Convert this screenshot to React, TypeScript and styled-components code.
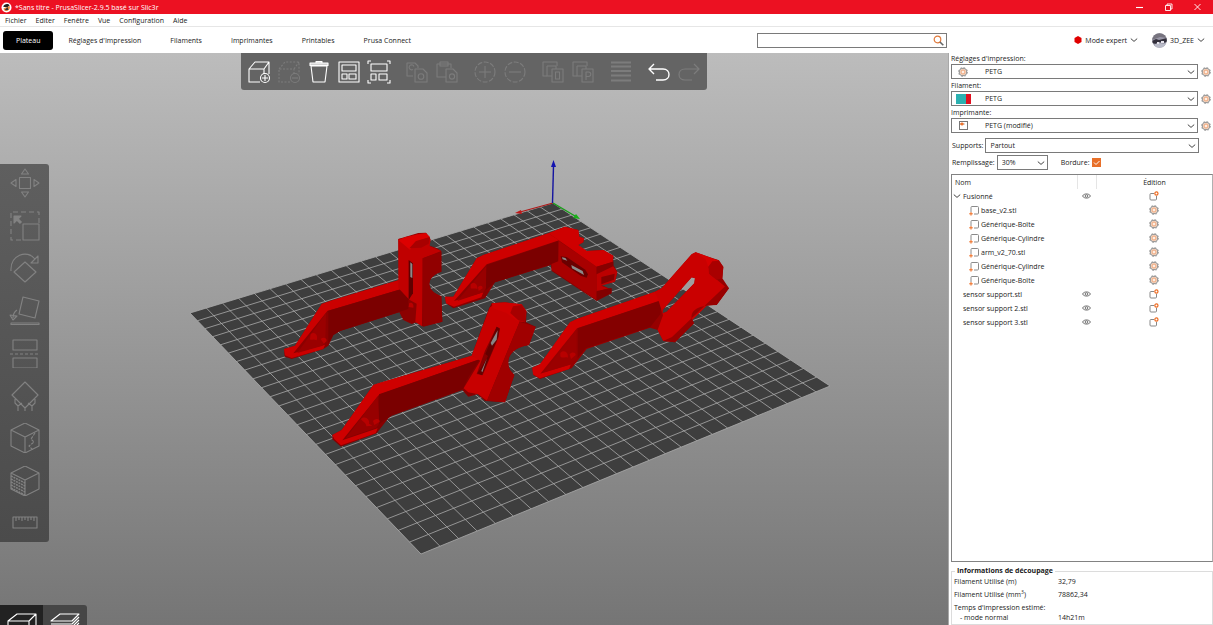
import React from "react";
import styled, { createGlobalStyle } from "styled-components";

const GlobalStyle = createGlobalStyle`
  * { box-sizing: border-box; }
  html, body, #root { height: 100%; }
  body { margin: 0; overflow: hidden; background: #fff; }
  body, button, input, select {
    font-family: "Open Sans", "Noto Sans", sans-serif;
    font-size: 7px;
    line-height: 11px;
    color: #1a1a1a;
  }
  button { border: 0; padding: 0; background: none; }
  svg { display: block; flex: none; }
`;

const Page = styled.div`
  height: 100vh;
  display: flex;
  flex-direction: column;
`;

/* ---------- title bar, menu, tabs ---------- */

const TitleBar = styled.header`
  flex: none;
  height: 14px;
  display: flex;
  align-items: center;
  background: #ec1122;
  color: #fff;
  padding: 0 10px 0 1px;
`;
const WindowTitle = styled.span`
  flex: 1;
  margin-left: 3px;
`;
const WindowButtons = styled.div`
  display: flex;
  gap: 18px;
  button { width: 11px; height: 12px; color: #fff; }
`;
const MenuBar = styled.nav`
  flex: none;
  height: 13px;
  display: flex;
  align-items: center;
  gap: 9px;
  padding: 0 5px;
  border-bottom: 1px solid #e6e6e6;
`;
const TabBar = styled.div`
  flex: none;
  height: 26px;
  display: flex;
  align-items: center;
  gap: 1px;
  padding-left: 3px;
`;
const Tab = styled.button<{ $active?: boolean }>`
  height: 19px;
  padding: 0 ${(p) => (p.$active ? 13 : 14)}px;
  border-radius: 3px;
  background: ${(p) => (p.$active ? "#000" : "transparent")};
  color: ${(p) => (p.$active ? "#fff" : "#1a1a1a")};
  white-space: nowrap;
`;
const SearchBox = styled.label`
  width: 190px;
  height: 15px;
  margin-left: auto;
  padding-right: 2px;
  display: flex;
  align-items: center;
  border: 1px solid #7a7a7a;
  background: #fff;
  input { flex: 1; min-width: 0; border: 0; outline: 0; padding: 0 3px; background: none; }
`;
const HeaderRight = styled.div`
  width: 265px;
  padding-right: 8px;
  display: flex;
  justify-content: flex-end;
  align-items: center;
  gap: 14px;
`;
const HeaderButton = styled.button`
  display: flex;
  align-items: center;
  gap: 3px;
`;

/* ---------- 3D view ---------- */

const Main = styled.main`
  flex: 1;
  min-height: 0;
  display: flex;
`;
const Viewport = styled.section`
  position: relative;
  flex: 1;
  min-width: 0;
  overflow: hidden;
  background: linear-gradient(#bcbcbc, #757575);
`;
const Scene = styled.svg`
  width: 100%;
  height: 100%;
`;
const TopTools = styled.div`
  position: absolute;
  top: 0;
  left: 50%;
  transform: translateX(-50%);
  height: 37px;
  padding: 0 6px;
  display: flex;
  align-items: center;
  gap: 14px;
  border-radius: 0 0 3px 3px;
  background: #646464;
`;
const ToolGroup = styled.div`
  display: flex;
  gap: 6px;
`;
const ToolButton = styled.button<{ $off?: boolean }>`
  width: 24px;
  height: 24px;
  color: ${(p) => (p.$off ? "#7c7c7c" : "#fff")};
`;
const SideTools = styled.div`
  position: absolute;
  top: 111px;
  left: 0;
  width: 49px;
  height: 378px;
  padding: 4px 0;
  display: flex;
  flex-direction: column;
  justify-content: space-between;
  align-items: center;
  border-radius: 0 3px 3px 0;
  background: linear-gradient(#5f5f5f, #4b4b4b);
  button { width: 32px; height: 30px; color: #828282; }
`;
const ViewToggle = styled.div`
  position: absolute;
  left: 0;
  bottom: 0;
  height: 20px;
  display: flex;
  overflow: hidden;
  border-radius: 0 3px 0 0;
`;
const ViewButton = styled.button<{ $active?: boolean }>`
  width: ${(p) => (p.$active ? 43 : 44)}px;
  display: flex;
  align-items: flex-start;
  justify-content: center;
  padding-top: 7px;
  background: ${(p) => (p.$active ? "#222" : "#464646")};
  color: #fff;
`;

/* ---------- right panel ---------- */

const Panel = styled.aside`
  width: 265px;
  flex: none;
  display: flex;
  flex-direction: column;
  padding-left: 2px;
  border-left: 1px solid #a8a8a8;
  background: #fff;
`;
const Preset = styled.div`
  display: flex;
  flex-direction: column;
  margin-bottom: 1px;
  label { height: 11px; }
`;
const PresetRow = styled.div`
  display: flex;
  align-items: center;
  gap: 3px;
  padding-right: 2px;
`;
const Combo = styled.div<{ $width?: number }>`
  position: relative;
  flex: ${(p) => (p.$width ? `0 0 ${p.$width}px` : "1")};
  height: 15px;
  display: flex;
  align-items: center;
`;
const Select = styled.select<{ $indent?: number }>`
  appearance: none;
  width: 100%;
  height: 15px;
  border: 1px solid #7a7a7a;
  border-radius: 0;
  background: #fff;
  padding: 0 12px 0 ${(p) => p.$indent ?? 4}px;
`;
const ComboIcon = styled.span`
  position: absolute;
  left: 4px;
  width: 16px;
  display: flex;
  justify-content: center;
  pointer-events: none;
`;
const ComboArrow = styled.span`
  position: absolute;
  right: 3px;
  pointer-events: none;
`;
const OptionRow = styled.div`
  display: flex;
  align-items: center;
  height: 15px;
  gap: 2px;
  margin: 4px 14px 0 1px;
  & + & { margin-top: 2px; }
`;
const CheckLabel = styled.label`
  display: flex;
  align-items: center;
  gap: 2px;
  margin-left: 11px;
`;
const Check = styled.input`
  appearance: none;
  width: 9px;
  height: 9px;
  margin: 0;
  background: #e8702a url("data:image/svg+xml,%3Csvg xmlns='http://www.w3.org/2000/svg' viewBox='0 0 9 9'%3E%3Cpath d='M2 4.5l2 2 3.5-3.5' fill='none' stroke='%23fff'/%3E%3C/svg%3E");
`;
const TreeBox = styled.div`
  flex: 1;
  min-height: 0;
  margin-top: 4px;
  border: 1px solid #828282;
  border-right-color: #b0b0b0;
`;
const Tree = styled.table`
  width: 100%;
  border-collapse: collapse;
  table-layout: fixed;
  th, td { height: 14px; padding: 0; font-weight: 400; text-align: left; }
  th:first-child { padding-left: 3px; }
  th:nth-child(2) { border: solid #e5e5e5; border-width: 0 1px; }
`;
const NameCell = styled.div<{ $level: number }>`
  display: flex;
  align-items: center;
  gap: 2px;
  padding-left: ${(p) => [1, 11, 17][p.$level]}px;
`;
const CellIcon = styled.div`
  display: flex;
  justify-content: center;
`;
const EditCell = styled.div`
  width: 116px;
  display: flex;
  justify-content: center;
`;
const Info = styled.fieldset`
  flex: none;
  margin: 4px 0 0;
  padding: 0 2px 1px;
  border: 1px solid #dcdcdc;
  legend { font-weight: 700; padding: 0 2px; margin-left: 1px; line-height: 10px; }
`;
const Stats = styled.dl`
  margin: 0;
  display: grid;
  grid-template-columns: 104px 1fr;
  row-gap: 2px;
  dt, dd { margin: 0; line-height: 11px; }
  sup { font-size: 5px; line-height: 0; }
`;
const TimeTitle = styled.dt`
  grid-column: 1 / -1;
`;
const TimeMode = styled.dt`
  padding-left: 6px;
  && { margin-top: -3px; }
  & + dd { margin-top: -3px; }
`;

/* ---------- small icons ---------- */

const Chevron = ({ w = 8 }: { w?: number }) => (
  <svg width={w} height={w} viewBox="0 0 8 8" fill="none" stroke="#444">
    <path d="M0.8 2.600L4 5.400l3.200-2.800" />
  </svg>
);

const Gear = () => (
  <svg width="10" height="10" viewBox="0 0 10 10" fill="none">
    <circle cx="5" cy="5" r="3.800" fill="#fdeee3" stroke="#8f8f8f" />
    <circle cx="5" cy="5" r="4.500" stroke="#8f8f8f" strokeWidth="0.800" strokeDasharray="1.770 1.770" />
    <circle cx="5" cy="5" r="2" stroke="#f0b48f" strokeWidth="1.400" />
  </svg>
);

const Eye = () => (
  <svg width="9" height="8" viewBox="0 0 9 8" fill="none" stroke="#666" strokeWidth="0.900">
    <path d="M0.500 4C2 1.200 7 1.200 8.500 4 7 6.800 2 6.800 0.500 4z" />
    <circle cx="4.500" cy="4" r="1.300" />
  </svg>
);

const EditIcon = () => (
  <svg width="10" height="10" viewBox="0 0 10 10" fill="none">
    <path d="M5 2.500H2A1 1 0 0 0 1 3.500V8a1 1 0 0 0 1 1h4.500a1 1 0 0 0 1-1V5" stroke="#888" />
    <circle cx="7.400" cy="2.500" r="1.600" stroke="#ed6b21" strokeWidth="1.200" />
  </svg>
);

const PartIcon = () => (
  <svg width="10" height="11" viewBox="0 0 10 11" fill="none">
    <path d="M2 7V2.500a1 1 0 0 1 1-1h5.500a1 1 0 0 1 1 1V8a1 1 0 0 1-1 1H5" stroke="#8a8a8a" />
    <path d="M2 7v3.600M0.200 8.800h3.600" stroke="#ed6b21" />
  </svg>
);

const PrinterIcon = () => (
  <svg width="9" height="9" viewBox="0 0 9 9" fill="none">
    <rect x="0.500" y="0.500" width="8" height="8" stroke="#777" />
    <path d="M1 3h5" stroke="#bbb" />
    <path d="M1.200 3h3.500M3 1.500v3" stroke="#ed6b21" strokeWidth="1.400" />
  </svg>
);

const FilamentSwatch = () => (
  <svg width="15" height="10" viewBox="0 0 15 10">
    <path d="M0 0h10v10H0z" fill="#2bb0b0" />
    <path d="M10 0h5v10h-5z" fill="#e01020" />
  </svg>
);

const Logo = () => (
  <svg width="11" height="11" viewBox="0 0 11 11">
    <circle cx="5.500" cy="5.500" r="5" fill="#fff" />
    <path d="M2.200 4.800C3 2 7 1 8.600 3.300L6.500 5.500z" fill="#222" />
    <path d="M2.500 6.500L8.800 4c.6 2.500-1 5-3.500 5-1.500 0-2.500-1-2.800-2.500z" fill="#ed8a3c" />
    <path d="M3.500 8.200l3-3.200 1 3z" fill="#333" />
  </svg>
);

const Avatar = () => (
  <svg width="15" height="15" viewBox="0 0 15 15">
    <clipPath id="avatar"><circle cx="7.500" cy="7.500" r="7.300" /></clipPath>
    <g clipPath="url(#avatar)">
      <path d="M0 0h15v15H0z" fill="#9a98a8" />
      <path d="M0 0h15v5L8 4 0 7z" fill="#77747f" />
      <path d="M0 8l4-2 3 1 8-2v4l-4 1-4-1-3 2-4-1z" fill="#33303c" />
      <path d="M3 11l4-1 5 1 2-1v5H2z" fill="#b9bbc8" />
      <path d="M5 9h2v2H5zM9 8h3v2H9z" fill="#e8e6ee" />
    </g>
  </svg>
);

/* ---------- tool icons ---------- */

const Ico = ({ children, w = 24, h = 24 }: { children: React.ReactNode; w?: number; h?: number }) => (
  <svg width={w} height={h} viewBox={`0 0 ${w} ${h}`} fill="none" stroke="currentColor" strokeWidth="1.100" strokeLinejoin="round">
    {children}
  </svg>
);

type Tool = { name: string; off?: boolean; art: React.ReactNode };

const topTools: Tool[][] = [
  [
    { name: "Ajouter", art: <><path d="M13 22H2V9h15v5M2 9l6-7h14v12M17 9l5-7" /><circle cx="18" cy="18" r="4.500" /><path d="M18 15v6M15 18h6" /></> },
    { name: "Supprimer", off: true, art: <><path d="M13 22H2V9h15v5M2 9l6-7h14v12M17 9l5-7" strokeDasharray="2 1.500" /><circle cx="18" cy="18" r="4.500" /><path d="M15 18h6" /></> },
    { name: "Tout supprimer", art: <><path d="M4 6l2 16h12l2-16z" /><path d="M3 3h18v2.500H3zM9 3V1.500h6V3" fill="currentColor" fillOpacity="0.700" /></> },
    { name: "Agencer", art: <><path d="M2 2h20v20H2z" /><path d="M5 5h14v6H5zM5 14h5v5H5zM12 14h7v5h-7z" /></> },
    { name: "Agencer la sélection", art: <><path d="M1 4V1h3M20 1h3v3M1 20v3h3M20 23h3v-3" /><path d="M4 4h16v7H4zM4 14h5v6H4zM12 14h8v6h-8z" /></> },
  ],
  [
    { name: "Copier", off: true, art: <><path d="M8 16H2V3h8l3 3v2M8 9.500a2.500 2.500 0 1 1 1-3" /><path d="M10 9h8l4 4v9H10z" /><circle cx="16" cy="16.500" r="2.800" /></> },
    { name: "Coller", off: true, art: <><path d="M11 17H2V4h14v4M5 2h8v4H5z" /><path d="M11 9h7l4 4v9H11z" /><circle cx="17" cy="16.500" r="2.600" /></> },
  ],
  [
    { name: "Ajouter une instance", off: true, art: <><circle cx="12" cy="12" r="10" strokeDasharray="5 1.500" /><path d="M12 6v12M6 12h12" /></> },
    { name: "Retirer une instance", off: true, art: <><circle cx="12" cy="12" r="10" strokeDasharray="5 1.500" /><path d="M6 12h12" /></> },
  ],
  [
    { name: "Scinder en objets", off: true, art: <><path d="M6 16H2V2h14v4" /><path d="M6 6h9v3M6 6v10h5" /><path d="M11 9h11v13H11zM14.500 12h4v7h-4z" /></> },
    { name: "Scinder en pièces", off: true, art: <><path d="M6 16H2V2h14v4" /><path d="M6 6h9v3M6 6v10h5" /><path d="M11 9h11v13H11zM15 20v-8h2.500a2 2 0 0 1 0 4.500H15" /></> },
  ],
  [
    { name: "Hauteur de couche variable", off: true, art: <path d="M2 2.500h20M2 6.500h20M2 11h20M2 15.500h20M2 20.500h20" strokeWidth="2.200" /> },
  ],
  [
    { name: "Annuler", art: <path d="M7 4L2 9l5 5M2 9h14c8 0 8 11 0 11H9" strokeWidth="1.400" /> },
    { name: "Rétablir", off: true, art: <path d="M17 4l5 5-5 5M22 9H8C0 9 0 20 8 20h7" strokeWidth="1.200" /> },
  ],
];

const sideTools: Tool[] = [
  { name: "Déplacer", art: <><path d="M10.500 9.500h11v11h-11z" /><path d="M16 1l3.500 5h-7zM16 29l3.500-5h-7zM2 15l5-3.500v7zM30 15l-5-3.500v7z" /></> },
  { name: "Redimensionner", art: <><path d="M12 29H2V1h28v11" strokeDasharray="5 3" /><path d="M14 13h16v16H14z" /><path d="M12 12L7 7" strokeWidth="3" /><path d="M5 5h7l-7 7z" fill="currentColor" /></> },
  { name: "Tourner", art: <><path d="M16 9l11 10-11 10L5 19zM2 18C1 2 18-4 26 6" /><path d="M29 3v7h-7z" /></> },
  { name: "Placer sur une face", art: <><path d="M14 1l16 4-4 17-16-4zM8 14c-3 2-4 4-4 8M1 19l3 5 4-4zM2 27h28v1.500H2z" /></> },
  { name: "Couper", art: <><path d="M4 2h24v10H4zM4 20h24v10H4z" /><path d="M1 16h30" strokeDasharray="3 2" /></> },
  { name: "Supports peints", art: <><path d="M16 1l13 13-13 13L3 14zM6 18v4l3 3v6M9 25l4-3M16 27v4M26 18v4l-3 3v6M23 25l-4-3" /></> },
  { name: "Couture", art: <><path d="M16 0l14 7v16l-14 7-14-7V7zM2 7l14 7 14-7M16 14v16" /><path d="M26 10l-4 6 3 3-5 4 4 4" strokeDasharray="3 1" /></> },
  { name: "Peinture multi-matériaux", art: <><path d="M16 0l14 7v16l-14 7-14-7V7zM2 7l14 7 14-7M16 14v16" /><path d="M2 10l14 7M2 13l14 7M2 16l14 7M2 19l14 7M2 22l14 7" strokeDasharray="2 0.800" strokeWidth="1.500" /></> },
  { name: "Mesurer", art: <path d="M4 9h24v11H4zM7 9v4M10 9v3M13 9v4M16 9v3M19 9v4M22 9v3M25 9v4" /> },
];

/* ---------- print bed in perspective ---------- */

type Pt = [number, number];
const bed: Pt[] = [[553, 203], [830, 386], [421, 554], [190, 313]];

function project(u: number, v: number): Pt {
  const [[x0, y0], [x1, y1], [x2, y2], [x3, y3]] = bed;
  const dx1 = x1 - x2, dx2 = x3 - x2, sx = x0 - x1 + x2 - x3;
  const dy1 = y1 - y2, dy2 = y3 - y2, sy = y0 - y1 + y2 - y3;
  const det = dx1 * dy2 - dx2 * dy1;
  const g = (sx * dy2 - dx2 * sy) / det;
  const h = (dx1 * sy - sx * dy1) / det;
  const w = g * u + h * v + 1;
  return [
    ((x1 - x0 + g * x1) * u + (x3 - x0 + h * x3) * v + x0) / w,
    ((y1 - y0 + g * y1) * u + (y3 - y0 + h * y3) * v + y0) / w,
  ];
}

const CELLS = 25;
const gridPath = Array.from({ length: CELLS + 1 }, (_, i) => {
  const t = i / CELLS;
  const seg = (a: Pt, b: Pt) => `M${a[0].toFixed(2)} ${a[1].toFixed(2)}L${b[0].toFixed(2)} ${b[1].toFixed(2)}`;
  return seg(project(t, 0), project(t, 1)) + seg(project(0, t), project(1, t));
}).join("");

const ArmUpright = () => (
  <g transform="translate(280 225) scale(.3333)">
    <path fill="#8c0000" d="M12 372l33-10 80-125 25-9 207-63-2-123 20-6 40-12 23-1 14 20-7 18 25 8 14 9v62c-48 15-48 58 0 74l3 76-57 15-20-13-15 5-25-12-12-23-178 56-20 12-15 32-15 10-95 30-21-7z" />
    <path fill="#cb0000" d="M12 372l33-10 80-125 25-9 207-63 28 5v16L142 258 40 385l95-26-5 13-95 27-20-8z" />
    <path fill="#7b0000" d="M142 258l243-72v66l-205 66-20 12-15 26V262z" />
    <path fill="#9a0000" d="M138 264L52 384l76-22 8-14z" />
    <path fill="#c00000" d="M355 42l20-4 40-12 23-1 14 20-3 18 35 15-56 22-2 204-20-13 4-55-22-12-33-35z" />
    <path fill="#910000" d="M428 100l56-20v60c-48 15-48 58 0 74l3 76-57 14z" />
    <path fill="#5f0000" d="M386 105l13 10v90l-13 20z" />
    <path fill="#8a8a8a" d="M391 112l6 5v42l-6-3z" />
    <path fill="#dc0000" d="M376 36l62-12 12 12-44 14-16 24-34-28z" />
    <path fill="#a80000" d="M388 70l20-22 42-12-4 20-22 12z" />
    <path fill="#b80000" d="M92 328c10-10 24 2 18 18-10-6-18 2-20-4zM122 342c8-6 18-4 18 6l-8 8zM388 234c10-4 14 6 12 14l-14-2z" />
  </g>
);

const ArmTilted = () => (
  <g transform="translate(325 295) scale(.3333)">
    <path fill="#870000" d="M22 420l28-15 95-135 15-5 280-83 52-142 8-15 40-3 50 6 15 22-2 32 29 13-20 55c-55 8-72 42-57 75l13 15-28 82-60-4-22-20-28 7-18-20-212 77-10 8-35 45-107 40-26-22z" />
    <path fill="#ce0000" d="M22 420l28-15 95-135 15-5 280-83 27 9-305 108L52 436l106-36-6 15-104 36-20-19z" />
    <path fill="#7a0000" d="M162 298l303-105-34 52-17 37-214 79-38 27z" />
    <path fill="#970000" d="M158 304L62 430l92-32 9-14z" />
    <path fill="#c80000" fillRule="evenodd" d="M440 182l54-144 18-13 50 10 22 45-98 237-26-19-30-6-14-12 50-83zM515 95l-35 72-25 70 18 4 47-112 5-29z" />
    <path fill="#650000" d="M515 95l9 6-4 24-49 116-14-6 20-30 12-22-8-6z" />
    <path fill="#858585" d="M518 106l-3 28-14 18-4-8zM486 190l-14 42-3-4z" />
    <path fill="#a00000" d="M584 80l48 15-20 55c-55 8-72 42-57 75l13 15-28 82-54-5z" />
    <path fill="#cf0000" d="M500 25l40-3 50 6 14 20-4 34-22-4-34-24-40-14z" />
    <path fill="#a60000" d="M556 54l8-20 26-4 13 18-3 34-20-6z" />
    <path fill="#b80000" d="M108 372c12-12 28 2 24 14l10 6-18 2c0-12-12-14-16-22zM144 378c8-8 20-8 20 2l-16 10z" />
  </g>
);

const ArmFlat = () => (
  <g transform="translate(440 155) scale(.3333)">
    <path fill="#8a0000" d="M15 425h25l70-115 20-10 195-65 50-20 40 10 3 20 14 5-2 12-15 8 25 18 50-3 30 17v28l12 20-7 30-40 10 20 10h10v15l-45 23-135-90-2-18-168 52-30 48-95 30-22-15z" />
    <path fill="#ce0000" d="M15 425h25l70-115 20-10 195-65 32 21-217 72L42 438l88-26-6 15-82 28-24-10z" />
    <path fill="#7b0000" d="M140 330l215-72v62l-190 62-28 24z" />
    <path fill="#980000" d="M138 335L52 438l78-26 8-14z" />
    <path fill="#a80000" d="M356 257l114 78v100L335 345v-18l20-8z" />
    <path fill="#cf0000" d="M325 235l50-20 40 10 3 20 14 5-2 12-15 8 25 18 50-3 30 17-2 18-48 15-115-80z" />
    <path fill="#870000" d="M470 335l50-15v10l-22 18-28 8z" />
    <path fill="#bb0000" d="M470 358l50-24 12 18-7 28-42 12 22 8-35 10z" />
    <path fill="#820000" d="M484 366l40-10-2 18-38 14zM470 408l44-8v14l-44 22z" />
    <path fill="#6a0000" d="M362 304l18 2 56 38 8 14-4 10-18-6-56-40z" />
    <path fill="#8a8a8a" d="M366 307l10 2 6 8-14-4zM394 330l34 18 4 12-36-20z" />
    <path fill="#b80000" d="M92 388c10-10 22 0 20 14-10-4-18 2-20-4zM114 396c8-6 14-4 14 4l-12 8z" />
  </g>
);

const ArmSlanted = () => (
  <g transform="translate(525 245) scale(.3333)">
    <path fill="#970000" fillRule="evenodd" d="M22 368l23-10 90-126 20-10 235-82 20-10 90-102 12-6 38 13 30 10 15 20-3 35 20 30-37 50c-55 0-78 15-75 40l7 15-57 57-35-4-17-33-23-7-190 64-45 58-95 32-20-12zM500 97l-87 98v10l12-5 83-85 2-15z" />
    <path fill="#d00000" d="M22 368l23-10 90-126 20-10 235-82 26 24-260 86L46 386l92-28-6 14-88 28-20-12z" />
    <path fill="#840000" d="M158 250l254-86-6 44-30 38-194 64-24 30z" />
    <path fill="#9b0000" d="M153 256L58 382l82-24 14-18z" />
    <path fill="#ca0000" fillRule="evenodd" d="M390 140l20-10 90-102 12-6 36 20 6 44 48 40-152 150-35 12-17-33 16-44-12-40zM500 97l-87 98v10l12-5 83-85 2-15z" />
    <path fill="#980000" d="M602 122l10 8-37 50c-55 0-78 15-75 40l7 15-57 57-35-4 26-12z" />
    <path fill="#a90000" d="M550 56l12-14 20 4 13 20-3 34-18 4-22-18z" />
    <path fill="#d60000" d="M512 22l38 13 32 12-20 2-12 16-8-22z" />
    <path fill="#b80000" d="M106 324c10-12 26 0 22 14-8-4-18 4-22-4zM134 328c6-8 18-6 18 2l-14 12z" />
  </g>
);

const Bed = () => (
  <Scene viewBox="0 53 948 572" preserveAspectRatio="xMidYMid slice" aria-label="Plateau d'impression">
    <polygon points={bed.map((p) => p.join(",")).join(" ")} fill="#3e3e3e" />
    <path d={gridPath} stroke="#ababab" strokeWidth="0.800" fill="none" />
    <path d="M553 203L520 212" stroke="#b01818" strokeWidth="1.200" />
    <path d="M515 213l6-3 1 4z" fill="#c01818" />
    <path d="M553 203l22 13" stroke="#17a017" strokeWidth="1.400" />
    <path d="M580 219l-7-1 3-4z" fill="#18b018" />
    <path d="M552.500 203l1-37" stroke="#1414a0" strokeWidth="1.400" />
    <path d="M553.500 160l2.500 7h-5z" fill="#1414b0" />
    <ArmUpright />
    <ArmFlat />
    <ArmSlanted />
    <ArmTilted />
  </Scene>
);

/* ---------- data ---------- */

const menus = ["Fichier", "Editer", "Fenêtre", "Vue", "Configuration", "Aide"];
const tabs = ["Plateau", "Réglages d'Impression", "Filaments", "Imprimantes", "Printables", "Prusa Connect"];
const presets = [
  { id: "print", label: "Réglages d'impression:", value: "PETG", icon: <Gear /> },
  { id: "filament", label: "Filament:", value: "PETG", icon: <FilamentSwatch /> },
  { id: "printer", label: "Imprimante:", value: "PETG (modifié)", icon: <PrinterIcon /> },
];
const objects = [
  { name: "Fusionné", level: 0 },
  { name: "base_v2.stl", level: 2 },
  { name: "Générique-Boîte", level: 2 },
  { name: "Générique-Cylindre", level: 2 },
  { name: "arm_v2_70.stl", level: 2 },
  { name: "Générique-Cylindre", level: 2 },
  { name: "Générique-Boîte", level: 2 },
  { name: "sensor support.stl", level: 1 },
  { name: "sensor support 2.stl", level: 1 },
  { name: "sensor support 3.stl", level: 1 },
];

export default function App() {
  return (
    <Page>
      <GlobalStyle />
      <TitleBar>
        <Logo />
        <WindowTitle>*Sans titre - PrusaSlicer-2.9.5 basé sur Slic3r</WindowTitle>
        <WindowButtons>
          <button aria-label="Réduire"><Ico w={11} h={12}><path d="M2 6.500h7" /></Ico></button>
          <button aria-label="Restaurer"><Ico w={11} h={12}><path d="M2.500 4.500h5v5h-5zM4 4.500V3h5v5H7.500" strokeWidth="0.900" /></Ico></button>
          <button aria-label="Fermer"><Ico w={11} h={12}><path d="M2.500 3l6 6M8.500 3l-6 6" strokeWidth="0.900" /></Ico></button>
        </WindowButtons>
      </TitleBar>
      <MenuBar>
        {menus.map((m) => <button key={m}>{m}</button>)}
      </MenuBar>
      <TabBar>
        {tabs.map((t, i) => <Tab key={t} $active={i === 0}>{t}</Tab>)}
        <SearchBox>
          <input type="text" aria-label="Rechercher" />
          <svg width="11" height="11" viewBox="0 0 11 11" fill="none">
            <circle cx="4.500" cy="4.500" r="3.300" stroke="#e07a3c" strokeWidth="1.200" />
            <path d="M7 7l3.300 3.300" stroke="#666" strokeWidth="1.600" />
          </svg>
        </SearchBox>
        <HeaderRight>
          <HeaderButton>
            <svg width="8" height="8" viewBox="0 0 8 8"><path d="M4 0l3.500 2v4L4 8 .5 6V2z" fill="#e00000" /></svg>
            Mode expert
            <Chevron />
          </HeaderButton>
          <HeaderButton>
            <Avatar />
            3D_ZEE
            <Chevron />
          </HeaderButton>
        </HeaderRight>
      </TabBar>
      <Main>
        <Viewport>
          <Bed />
          <TopTools>
            {topTools.map((group, i) => (
              <ToolGroup key={i}>
                {group.map((t) => (
                  <ToolButton key={t.name} $off={t.off} aria-label={t.name}><Ico>{t.art}</Ico></ToolButton>
                ))}
              </ToolGroup>
            ))}
          </TopTools>
          <SideTools>
            {sideTools.map((t) => (
              <button key={t.name} aria-label={t.name}><Ico w={32} h={30}>{t.art}</Ico></button>
            ))}
          </SideTools>
          <ViewToggle>
            <ViewButton $active aria-label="Éditeur 3D">
              <Ico w={32} h={24}><path d="M2 9l9-7h19l-7 7zM2 9v14M23 9v14M30 2v14" /></Ico>
            </ViewButton>
            <ViewButton aria-label="Aperçu">
              <Ico w={32} h={24}><path d="M2 9l9-7h19l-7 7zM2 12h21l7-7M2 15h21l7-7M23 18l7-7" /></Ico>
            </ViewButton>
          </ViewToggle>
        </Viewport>
        <Panel>
          {presets.map((p) => (
            <Preset key={p.id}>
              <label htmlFor={p.id}>{p.label}</label>
              <PresetRow>
                <Combo>
                  <Select id={p.id} $indent={33}><option>{p.value}</option></Select>
                  <ComboIcon>{p.icon}</ComboIcon>
                  <ComboArrow><Chevron /></ComboArrow>
                </Combo>
                <button aria-label={`Modifier ${p.label}`}><Gear /></button>
              </PresetRow>
            </Preset>
          ))}
          <OptionRow>
            <label htmlFor="supports">Supports:</label>
            <Combo>
              <Select id="supports"><option>Partout</option></Select>
              <ComboArrow><Chevron /></ComboArrow>
            </Combo>
          </OptionRow>
          <OptionRow>
            <label htmlFor="infill">Remplissage:</label>
            <Combo $width={51}>
              <Select id="infill"><option>30%</option></Select>
              <ComboArrow><Chevron /></ComboArrow>
            </Combo>
            <CheckLabel>Bordure:<Check type="checkbox" defaultChecked /></CheckLabel>
          </OptionRow>
          <TreeBox>
            <Tree>
              <colgroup><col /><col style={{ width: 19 }} /><col style={{ width: 116 }} /></colgroup>
              <thead>
                <tr><th>Nom</th><th aria-label="Visible" /><th><EditCell>Édition</EditCell></th></tr>
              </thead>
              <tbody>
                {objects.map((o, i) => (
                  <tr key={i}>
                    <td>
                      <NameCell $level={o.level}>
                        {o.level === 0 && <Chevron />}
                        {o.level === 2 && <PartIcon />}
                        {o.name}
                      </NameCell>
                    </td>
                    <td>{o.level < 2 && <CellIcon><Eye /></CellIcon>}</td>
                    <td><EditCell>{o.level < 2 ? <EditIcon /> : <Gear />}</EditCell></td>
                  </tr>
                ))}
              </tbody>
            </Tree>
          </TreeBox>
          <Info>
            <legend>Informations de découpage</legend>
            <Stats>
              <dt>Filament Utilisé (m)</dt><dd>32,79</dd>
              <dt>Filament Utilisé (mm<sup>3</sup>)</dt><dd>78862,34</dd>
              <TimeTitle>Temps d'impression estimé:</TimeTitle>
              <TimeMode>- mode normal</TimeMode><dd>14h21m</dd>
            </Stats>
          </Info>
        </Panel>
      </Main>
    </Page>
  );
}
